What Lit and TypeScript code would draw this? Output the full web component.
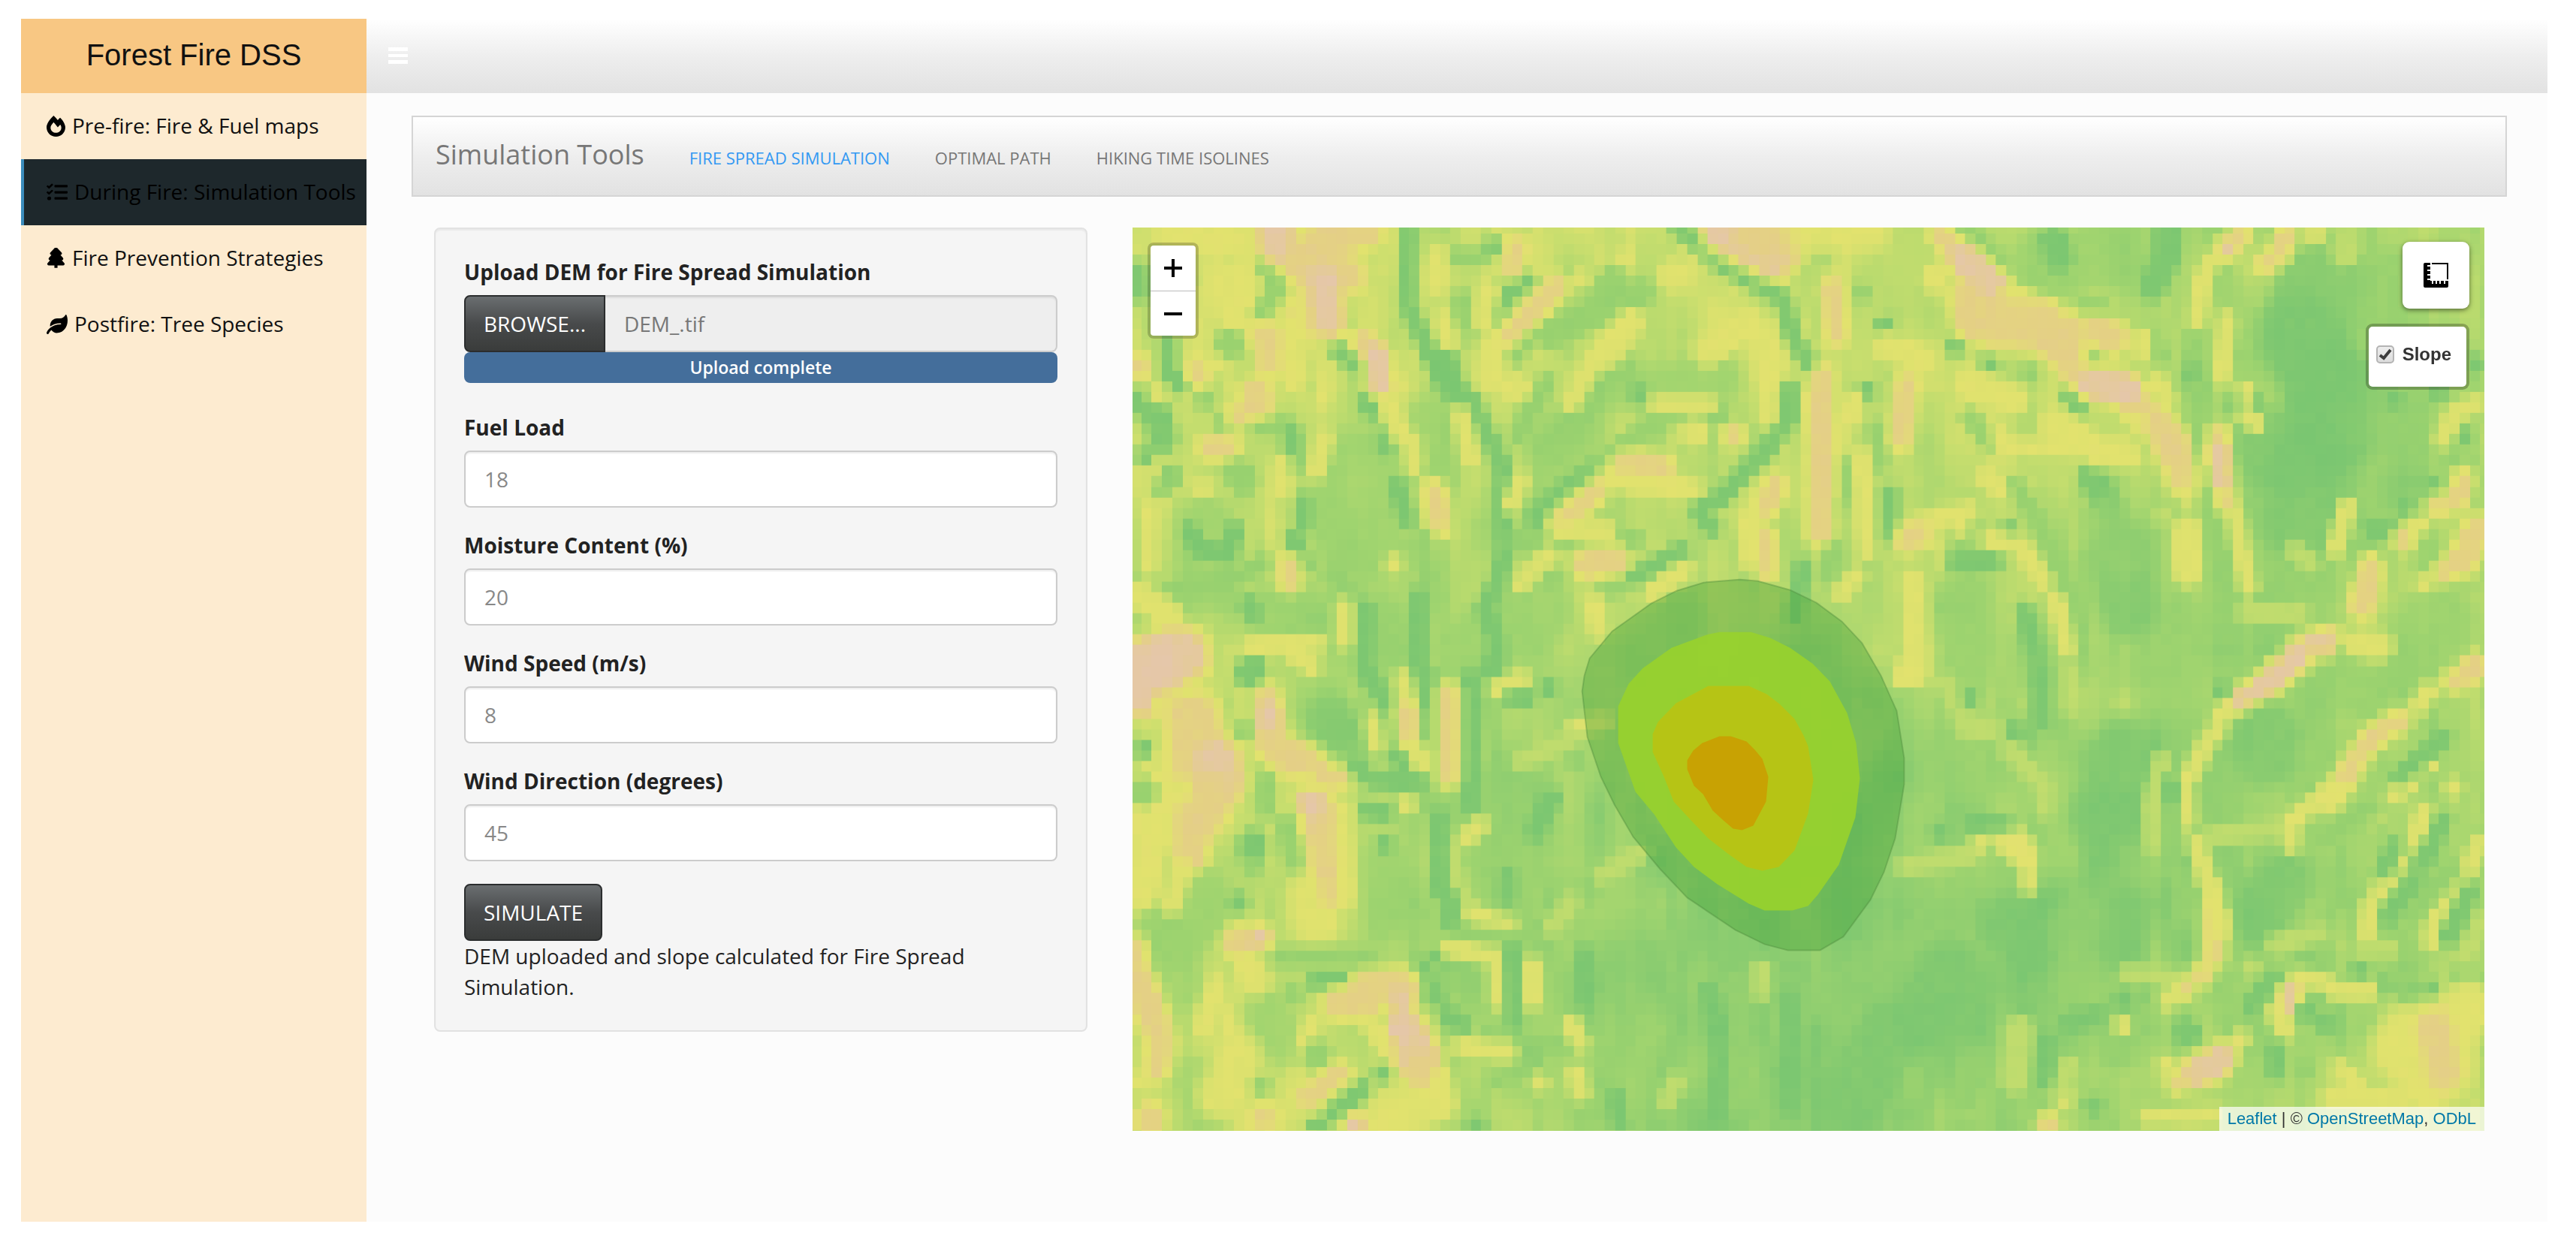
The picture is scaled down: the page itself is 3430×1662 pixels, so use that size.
import { LitElement, html, css, svg } from "lit";
import { customElement, property, query, state } from "lit/decorators.js";
import { classMap } from "lit/directives/class-map.js";

/* ---------- icons ---------- */

const ICONS: Record<string, { box: string; shape: unknown }> = {
  fire: {
    box: "0 0 448 512",
    shape: svg`<path d="M323.56 51.2c-20.8 19.3-39.58 39.59-56.22 59.97C240.08 73.62 206.28 35.53 168 0 69.74 91.17 0 209.96 0 281.6 0 408.85 100.29 512 224 512s224-103.15 224-230.4c0-53.27-51.98-163.14-124.44-230.4zm-19.47 340.65C282.43 407.01 255.72 416 226.86 416 154.71 416 96 368.26 96 290.75c0-38.61 24.31-72.63 72.79-130.75 6.93 7.98 98.83 125.34 98.83 125.34l58.63-66.88c4.14 6.85 7.91 13.55 11.27 19.97 27.35 52.19 15.81 118.97-33.43 153.42z"/>`,
  },
  tasks: {
    box: "0 0 512 512",
    shape: svg`<path d="M139.61 35.5a12 12 0 0 0-17 0L58.93 98.81l-22.7-22.12a12 12 0 0 0-17 0L3.53 92.41a12 12 0 0 0 0 17l47.59 47.4a12.78 12.78 0 0 0 17.61 0l15.59-15.62L156.52 69a12.09 12.09 0 0 0 .09-17zm0 159.19a12 12 0 0 0-17 0l-63.68 63.72-22.7-22.1a12 12 0 0 0-17 0L3.53 252a12 12 0 0 0 0 17L51 316.5a12.77 12.77 0 0 0 17.6 0l15.7-15.69 72.2-72.22a12 12 0 0 0 .09-16.9zM64 368c-26.49 0-48.59 21.5-48.59 48S37.53 464 64 464a48 48 0 0 0 0-96zm432 16H208a16 16 0 0 0-16 16v32a16 16 0 0 0 16 16h288a16 16 0 0 0 16-16v-32a16 16 0 0 0-16-16zm0-320H208a16 16 0 0 0-16 16v32a16 16 0 0 0 16 16h288a16 16 0 0 0 16-16V80a16 16 0 0 0-16-16zm0 160H208a16 16 0 0 0-16 16v32a16 16 0 0 0 16 16h288a16 16 0 0 0 16-16v-32a16 16 0 0 0-16-16z"/>`,
  },
  tree: {
    box: "-32 0 448 512",
    shape: svg`<path stroke="#000" stroke-width="30" d="M378.31 378.49L298.42 288h30.63c9.01 0 16.98-5 20.78-13.06 3.8-8.04 2.55-17.26-3.28-24.05L268.42 160h28.89c9.1 0 17.3-5.35 20.86-13.61 3.52-8.13 1.86-17.59-4.24-24.08L203.66 4.83c-6.03-6.45-17.28-6.45-23.32 0L70.06 122.31c-6.1 6.49-7.75 15.95-4.24 24.08C69.38 154.65 77.59 160 86.69 160h28.89l-78.14 90.91c-5.81 6.78-7.06 15.99-3.27 24.04C37.97 283 45.93 288 54.95 288h30.63L5.69 378.49c-6 6.79-7.36 16.09-3.56 24.26 3.75 8.05 12 13.25 21.01 13.25H170v60h44v-60h146.86c9.01 0 17.26-5.2 21.01-13.25 3.8-8.17 2.44-17.47-3.56-24.26z"/>`,
  },
  leaf: {
    box: "0 0 576 512",
    shape: svg`<path d="M546.2 9.7c-5.6-12.5-21.6-13-28.3-1.2C486.9 62.4 431.4 96 368 96h-80C182 96 96 182 96 288c0 7 .8 13.7 1.5 20.5C161.3 262.8 253.4 224 384 224c8.8 0 16 7.2 16 16s-7.2 16-16 16C132.6 256 26 410.1 2.4 468c-6.6 16.3 1.2 34.9 17.5 41.6 16.4 6.8 35-1.1 41.8-17.3 1.5-3.6 20.9-47.9 71.9-90.6 32.4 43.9 94 85.8 174.9 77.2C465.5 467.5 576 326.7 576 154.3c0-50.2-10.8-102.2-29.8-144.6z"/>`,
  },
  bars: {
    box: "0 0 26 22",
    shape: svg`<path d="M0 0h26v5H0zM0 9h26v4H0zM0 17h26v5H0z"/>`,
  },
};

const icon = (name: string, cls: string) =>
  html`<svg class=${cls} viewBox=${ICONS[name].box} preserveAspectRatio="none" aria-hidden="true">${ICONS[name].shape}</svg>`;

/* ---------- slope raster ---------- */

const MAP_W = 1801;
const MAP_H = 1204;
const CELL_W = 13.72;
const CELL_H = 14.06;
const COLS = 132;
const ROWS = 87;

const LEVELS: Record<string, number> = { G: 0.03, g: 0.19, m: 0.48, y: 0.68, o: 0.84, p: 0.95 };

/** Colour ramp from flat ground to the steepest slope. */
const RAMP: [number, number[]][] = [
  [0, [119, 197, 113]],
  [0.25, [160, 212, 111]],
  [0.5, [196, 221, 110]],
  [0.68, [226, 226, 110]],
  [0.84, [228, 207, 134]],
  [1, [229, 196, 182]],
];

/** Coarse slope trend across the whole sheet. */
const TREND = [
  [0.54, 0.62, 0.5, 0.52, 0.5, 0.45, 0.3, 0.38, 0.36],
  [0.5, 0.5, 0.44, 0.46, 0.52, 0.5, 0.42, 0.12, 0.3],
  [0.42, 0.34, 0.36, 0.42, 0.42, 0.38, 0.28, 0.25, 0.35],
  [0.58, 0.44, 0.27, 0.25, 0.1, 0.25, 0.14, 0.25, 0.32],
  [0.55, 0.44, 0.28, 0.17, 0.08, 0.08, 0.14, 0.25, 0.3],
  [0.55, 0.56, 0.4, 0.17, 0.12, 0.25, 0.35, 0.42, 0.52],
];

interface Sheet {
  x: number;
  y: number;
  sx: number;
  sy: number;
  lines: string;
}

/** Digitised valleys and ridges: level, width in cells, then the vertices. */
const SHEETS: Sheet[] = [
  {
    x: -27, y: -23, sx: 1.6505, sy: 2.529,
    lines: `g7 550,900 540,1080
g4 200,1060 200,1260|g5 930,1350 780,1500|g4 600,1400 600,1560|g3 1120,560 960,780|g3 1040,760 920,980|g3 330,1360 470,1380
g3 700,700 710,900|g2 1160,280 960,420|g3 1330,560 1180,620|y3 260,250 290,370|y2 380,440 400,560|y2 130,90 270,100
G1 650,60 650,320 675,400 700,490 735,590 790,640 820,740 860,860 860,1030 865,1150 850,1250 820,1340 845,1450 845,1560
G2 735,520 745,590|G1 1250,60 1300,130 1350,190 1420,250 1475,300 1500,440 1535,520
G1 1490,600 1490,700 1450,790 1400,870 1340,970 1290,1010 1320,1070|G1 1250,1150 1190,1200 1150,1240|g2 1100,1260
G1 125,440 125,540 150,590|g1 205,640|G2 70,650 100,700 110,770|G1 70,830|G1 60,200 60,280|g1 335,190 370,250 330,340
g1 240,725 380,725|G1 398,760 398,860|g1 420,960|G1 420,1000 420,1060|G1 398,1110 420,1190|g1 480,1230 530,1290 557,1350|G1 557,1350 557,1560
G1 300,1330 310,1360|g2 460,1390|G1 915,240 870,290 845,370|g1 800,450|g1 910,430 890,490|g1 750,160 810,160|G1 840,125
G1 560,650 570,680|g1 590,760|G1 600,800|G1 628,930 650,1040|G1 170,1080 190,1140 260,1160 270,1080|G1 130,900|g1 110,940
g2 270,880 290,910|G1 500,480 540,520|g2 1100,240 1080,290|g1 770,300 770,390|G1 1065,620 1040,660|g1 1130,540 1065,620 990,740 940,800
G1 1070,860 980,960 930,1040|G1 890,1120|g1 960,580 910,700 890,760|g1 1220,690 1340,690|g1 1220,700 1150,760 1070,860|G1 1160,620
g1 680,1110 690,1230|G1 675,1300 675,1560|g1 890,1110 1150,1110|g1 970,1250|g1 120,1290 260,1250 330,1190|G1 320,1540|G1 1520,1200 1500,1360
g4 1240,1400 1180,1530|g1 160,250|g2 260,450
p2 360,70 365,130|o2 410,190 470,100|o2 470,100 560,70|o2 440,180 520,220|p2 465,250 475,370|o1 340,420 340,520|o1 550,440 580,500
p1 585,490 590,590|y1 610,650 640,760|y1 660,780 665,860|y1 700,930 730,1080|o1 715,960 715,1030|o2 320,620 320,650|o1 280,700|o1 190,550
o1 215,800 255,800|o1 60,530|y1 100,620|y1 720,150 710,250|y1 730,370 740,430|o1 890,130 880,190|y1 830,280 820,380|o1 980,260 930,330 870,420
y2 830,470 830,560|y2 890,600|y1 1030,230|y2 1140,380 1090,480|y1 1060,510 1040,570 1010,650|p3 1350,70 1400,110 1450,150|o3 1420,80 1480,100
y2 1230,220|y2 1400,380 1310,480|y1 1440,540 1440,700|o1 1370,760|y2 1280,750|y1 1200,655 1310,655|o2 1130,870 1200,880|y1 1080,910 1280,940
o1 1060,960 1030,990 990,1045|y1 980,1080 1090,1080|o1 1460,930 1440,1000|o1 1440,1110 1440,1210|y1 1400,1040 1400,1180
o1 1550,640 1555,1080|o2 1050,1190 1100,1180|y1 960,1160 900,1260|y1 1260,1210 1190,1290|y1 470,770 450,880|y1 375,860 375,940|y1 770,700 790,840
y1 900,910 880,990|o1 390,1200 390,1250|y1 620,1190|y1 80,1010 80,1200|y2 60,1300 120,1360|p4 60,1540 150,1500|y1 510,1340 510,1450
y1 400,1500 440,1540|y1 310,1470 450,1460|y1 1060,1330 1070,1420|y1 1130,160|y1 1460,470 1460,560|y1 230,520|y1 200,940`,
  },
  {
    x: 893, y: -23, sx: 1.522, sy: 2.529,
    lines: `G7 1060,260 1030,420|G6 1000,420 1050,560|G7 1070,600 1080,740|G6 1020,800 950,820|G6 1030,860 1010,1060|g5 1200,250 1180,330
g4 1200,660 1220,780|g5 600,150 500,180|g3 480,1450 480,1560|g4 1000,1230 1030,1280|g3 720,1400 720,1540|g6 1280,1400 1250,1540|g3 330,1300 330,1560
G2 510,100 520,160|G2 740,70 740,150 710,260|g1 600,330 560,340|g1 330,70 400,170|g2 40,130|G1 165,390|G1 310,460|G1 380,515|g1 460,550|G1 540,620 560,660
g1 800,400 790,500|G1 790,550 800,600|g1 800,600 800,820 830,1000 840,1150 860,1300 880,1450|G1 1200,640|G1 880,655 920,655
G1 1340,765|g1 1320,840|G1 1280,930|G1 1220,1000|G1 1190,1080 1150,1080|g1 1130,1110|G1 420,1080|g1 320,1110|G1 1290,610|G1 1370,520
G1 310,1185 390,1185|G2 590,900 620,1000|G4 640,1150 660,1340|g3 620,1050 640,1150|g1 430,930 480,1050 515,1200 560,1400 570,1560
g1 340,700 380,780|g1 150,740 155,850|G1 175,960 175,1090|g1 70,1000 60,1180 50,1230|G1 450,1350 470,1480|g1 120,280|G1 130,610|g1 590,480
g1 700,430 730,490|g1 500,340 610,350|g1 90,870 90,960
o1 280,80 310,140|p2 330,170 370,230 390,270|y1 420,280 500,330|o2 330,300 340,380|o3 400,390 480,390 530,410|o2 600,410 630,430|o2 500,440 540,500
o1 550,560|p2 590,590 650,600|p1 670,620 685,690|o2 720,710 750,780|o2 750,800 770,900|y1 780,960|o1 845,760 845,820|p1 845,830 850,910|o1 860,980
y1 880,1040 890,1150 905,1270|o1 890,80|p1 860,130|y1 830,170 810,240 800,370|o1 980,80 970,140|o1 940,180|y1 1040,80|y1 860,370 850,560|y1 900,610
y1 900,690 920,720|y1 1370,650 1320,690 1300,770|o1 60,270 70,420|y3 120,60 20,70|o1 40,560 45,1080|y1 105,640 100,700|y1 120,830 130,1150
o1 210,590 200,770|y2 240,500 170,460|y2 340,580 430,640|y2 510,720 580,790|y1 400,760 420,800 660,800|y1 600,840 670,840|y2 270,230|y1 370,900 400,940
y1 340,1010 220,1060|y1 320,1070|o1 210,1110 240,1100|y1 380,1110 440,1130 470,1200 490,1250|y1 515,1320 535,1480|y1 110,1230 80,1290|y2 225,1260 230,1560
m1 730,1030|y2 780,1080 780,1220|y1 1105,1000 1080,1140|o1 1340,910 1330,970|o1 1290,1000|y1 1250,1060|o1 1220,1110|y1 1150,1180 1120,1340|o1 1155,1220 1140,1340
o2 1370,1080 1340,1180|o1 1300,1220|y1 1260,1260|y1 1080,1430|p2 1050,1465 1010,1500|o1 960,1550|o1 1360,1540|y2 1130,1460 1170,1470|m1 900,1360 1010,1360
y1 690,430 690,480|y1 680,700|m2 1100,140|m1 1000,1150 1030,1190|y1 720,580 740,640`,
  },
  {
    x: -27, y: 577, sx: 1.6505, sy: 2.45,
    lines: `g5 200,800 130,900|g4 110,920 140,1050|g4 470,160 490,220|g3 600,680 600,830|g3 340,1150 370,1240|g4 840,480 820,620|g4 880,600 860,740|g3 180,1370 210,1480
y3 60,470 100,560|y2 80,660 70,760|y3 280,1300 240,1420|y3 700,1440 620,1500|y3 440,780 450,860
p3 100,30 70,110|y1 110,140 190,130|o4 180,210 190,310|p3 235,340 240,390|o3 220,440 200,500|o2 185,540 175,630|y1 160,680 130,800|o1 340,110 345,230|p1 345,170 345,210
o2 350,280 390,320|o2 430,320 490,370|p1 430,460|p2 455,490 455,530|o2 465,560 470,660|o1 480,690 485,760|y1 510,480 515,780
G2 300,40|G2 310,600 310,620|g1 310,670|G1 70,290|g2 70,430|g1 340,400 340,490|g1 380,540 400,660|G1 280,790|g1 290,230
G3 480,200 520,270|G1 540,350 570,390 650,400|g1 690,470 760,500|G1 570,60 600,130 605,220 630,320 680,390|G1 695,60 695,260|G1 790,60 790,480
o1 740,110 740,380|y1 640,60 650,200|o1 650,180 650,250|y1 670,290 680,340|y1 575,200 580,270|G1 830,30|y1 900,60 850,90|G1 910,125 880,125|G1 960,90
y1 1080,200 1020,220|m1 1010,260 900,330|g1 1020,330|G1 970,450 930,560|G1 560,490 600,500|G1 600,600|y1 650,470|y1 810,540 780,580
m1 745,620 760,740 780,810|y1 800,830 870,870|G1 720,520 720,750|G1 745,780 745,850|g1 770,900 900,910 960,860 1040,760 1100,680|G1 870,710 870,770
m1 1160,630 1080,700|m1 1010,790 970,870|G1 720,970|y1 740,940 850,970|y1 850,1010 850,1110|G1 500,1045 450,1050|g1 400,1090|g1 560,970 380,970
G1 680,1000 710,1100|G1 740,1160 770,1190|g1 830,1210|G1 880,950 885,1190|g1 900,1240|G1 930,1280|y1 925,1000 925,1110|G1 1040,960 1040,1110
g1 920,1250 1030,1260|g1 1080,1370|G1 1110,1430 1120,1520|y1 1010,1190 1030,1250|y1 1020,1350 1030,1410|o2 280,920|p1 330,905|y2 300,1000 320,1050|y1 230,1060 200,1200
o2 560,1070 640,1060|o2 500,1120 560,1120|y1 440,1180 420,1260|p1 640,1110 635,1200|p3 650,1230 670,1290|o2 680,1330|y1 770,1260 870,1280
o1 55,940 60,1020|o2 70,1080 90,1170|o1 110,1230 100,1330|y1 60,1380|g1 330,1390|g2 450,1290|G1 595,1350|G1 550,1400 490,1480|G1 450,1520
o1 500,1350 430,1430|o1 330,1490|o2 80,1500|p1 535,1520|y1 730,1360 735,1460|y1 940,1380|G1 1310,1080 1340,1300 1330,1500|G1 800,1525
G1 1490,1100 1490,1460|m1 1430,1010 1430,1080|m1 1220,1440 1240,1380|g1 1380,1050 1380,1450|y1 560,1180 600,1260|g1 850,1370`,
  },
  {
    x: 893, y: 577, sx: 1.522, sy: 2.005,
    lines: `G5 640,260 650,360|G4 600,420 660,420|G5 940,200 930,250|G4 980,600 930,680|g6 300,780 100,900|G5 180,1000 100,1180|G5 300,850 250,950|G4 480,750 420,700
g4 300,260 400,270|g4 850,350 820,400|g3 1040,60 1150,90|g4 560,700 570,820|G3 660,680 650,760|g2 350,1100 330,1160
y1 210,15 200,50|m1 290,60 320,130|m1 330,180 390,190|m1 420,240 470,310|m1 490,340 490,400|G1 480,20 485,160|m1 545,30 545,120|m1 650,110
y1 360,490|o1 430,500|y2 410,465 450,510|y1 460,540 460,600|m1 340,520 210,550|G1 280,460|G1 350,435 410,435|G1 430,190|G1 340,100
p1 1000,5 950,60|p1 930,70 880,110|y1 850,140 840,190|y1 820,220 790,300|y1 775,320 780,430|y1 800,490 820,590|y1 835,610 840,680|o1 835,690 835,790|y1 830,640 850,720
o1 810,840|o1 770,880|y1 740,910|m1 730,270 710,380|m1 710,400 710,490|G1 748,330 748,400|g1 748,400 750,550 780,640|G1 850,80
o1 1370,20 1320,55|y1 1270,80 1250,120|o1 1210,160 1160,200|o1 1150,220 1110,290|o1 1100,320 1070,370|y1 1080,340 1000,420|y1 990,440 990,490
m1 960,450 830,470|y1 1270,280|y1 1230,330 1200,360|m1 1160,420|y1 1260,410 1240,480|y1 1210,530 1170,620|y1 1150,660 1145,730|m1 1140,770 1190,770
y1 1375,490 1350,560|y1 1330,600 1290,670|y1 1280,690 1275,750|m1 1380,700 1340,790|y1 1320,340
G1 1300,210 1210,310|g1 1150,400 1060,470|G1 1300,430 1260,540|G1 1200,500 1180,560|G1 1240,590 1190,680|g1 1320,560 1240,680|G1 1350,620 1310,740
m1 1050,730 960,760|m1 910,820|g1 1050,800|G1 1130,830|G1 1180,870|G1 1230,900|G1 1280,880|G1 1330,855 1370,855|G1 960,850 910,920|g1 860,970|G2 780,995
y1 1010,850 1060,860|y1 1080,885 1150,885|p1 990,890 985,920|y1 960,940 980,990|G1 1020,940|G1 1060,970
y4 1350,930 1330,960|y5 1240,1010 1220,1040|y4 1310,1080 1270,1130|o2 1280,980 1300,1100|y1 890,1010|o1 860,1050|p2 840,1075 800,1100|o1 760,1130|y1 740,1080
G1 700,880|G1 650,910|G1 600,945 540,970|G1 495,1020 490,1120|g1 480,1190|m2 440,990 430,1120|y1 650,975|y1 530,1170|o1 500,1240|y1 700,1220 830,1215
G1 590,1190|g2 640,1060|y1 1090,1090 1120,1130|y2 1080,1170 1200,1180|G1 960,1040 960,1100|g1 1020,1090|m1 750,850 660,840|m1 540,1080 530,1140`,
  },
];

const mix = (a: number, b: number, t: number) => a + (b - a) * t;
const clamp = (v: number) => Math.max(0, Math.min(1, v));

const hash = (x: number, y: number) => {
  const s = Math.sin(x * 127.1 + y * 311.7) * 43758.5453;
  return s - Math.floor(s);
};

function valueNoise(x: number, y: number) {
  const ix = Math.floor(x);
  const iy = Math.floor(y);
  const fx = x - ix;
  const fy = y - iy;
  return mix(
    mix(hash(ix, iy), hash(ix + 1, iy), fx),
    mix(hash(ix, iy + 1), hash(ix + 1, iy + 1), fx),
    fy,
  );
}

function segmentDistance(px: number, py: number, a: number[], b: number[]) {
  const dx = b[0] - a[0];
  const dy = b[1] - a[1];
  const len = dx * dx + dy * dy;
  const t = len ? clamp(((px - a[0]) * dx + (py - a[1]) * dy) / len) : 0;
  return Math.hypot(px - a[0] - dx * t, py - a[1] - dy * t);
}

function slopeGrid() {
  const grid: number[][] = [];
  for (let r = 0; r < ROWS; r++) {
    const row: number[] = [];
    for (let c = 0; c < COLS; c++) {
      const u = Math.min((c / COLS) * 8, 7.999);
      const v = Math.min((r / ROWS) * 5, 4.999);
      const iu = Math.floor(u);
      const iv = Math.floor(v);
      const trend = mix(
        mix(TREND[iv][iu], TREND[iv][iu + 1], u - iu),
        mix(TREND[iv + 1][iu], TREND[iv + 1][iu + 1], u - iu),
        v - iv,
      );
      const broad = (valueNoise(c / 3, r / 4) - 0.5) * 0.2;
      const streak = (valueNoise(c / 1.3 + 40, r / 5 + 9) - 0.5) * (0.08 + trend * 0.35);
      row.push(trend + broad + streak);
    }
    grid.push(row);
  }
  for (const sheet of SHEETS) {
    for (const entry of sheet.lines.split(/[|\n]/)) {
      const [head, ...rest] = entry.trim().split(" ");
      const level = LEVELS[head[0]];
      const half = Number(head.slice(1)) / 2;
      const broad = half > 1 && level < 0.5;
      const fade = half > 1 ? 1.8 : level > 0.8 ? 1.4 : 0.9;
      const strength = broad ? 0.7 : 0.94;
      const pts = rest.map((p) => {
        const [x, y] = p.split(",").map(Number);
        return [(sheet.x + x / sheet.sx) / CELL_W, (sheet.y + y / sheet.sy) / CELL_H];
      });
      if (pts.length === 1) pts.push(pts[0]);
      const reach = half + fade + 1;
      const xs = pts.map((p) => p[0]);
      const ys = pts.map((p) => p[1]);
      const c0 = Math.max(0, Math.floor(Math.min(...xs) - reach));
      const c1 = Math.min(COLS - 1, Math.ceil(Math.max(...xs) + reach));
      const r0 = Math.max(0, Math.floor(Math.min(...ys) - reach));
      const r1 = Math.min(ROWS - 1, Math.ceil(Math.max(...ys) + reach));
      for (let r = r0; r <= r1; r++) {
        for (let c = c0; c <= c1; c++) {
          let d = Infinity;
          for (let i = 1; i < pts.length; i++) {
            d = Math.min(d, segmentDistance(c + 0.4, r + 0.1, pts[i - 1], pts[i]));
          }
          const t = clamp(1 - (d - half) / fade);
          grid[r][c] = mix(grid[r][c], level, t * strength);
        }
      }
    }
  }
  return grid;
}

function rampColour(v: number) {
  const t = clamp(v);
  let i = 1;
  while (i < RAMP.length - 1 && RAMP[i][0] < t) i++;
  const [a, ca] = RAMP[i - 1];
  const [b, cb] = RAMP[i];
  const k = (t - a) / (b - a);
  return `rgb(${ca.map((n, j) => Math.round(mix(n, cb[j], k))).join(",")})`;
}

@customElement("slope-map")
export class SlopeMap extends LitElement {
  @state() private slope = true;
  @query("canvas") private canvas!: HTMLCanvasElement;

  static styles = css`
    :host {
      display: block;
      position: relative;
      aspect-ratio: 184 / 123;
      overflow: hidden;
      background: #ddd;
      font-family: "Liberation Sans", Arial, sans-serif;
      color: #333;
    }
    canvas,
    .overlay {
      position: absolute;
      inset: 0;
      width: 100%;
      height: 100%;
      display: block;
    }
    .hidden {
      visibility: hidden;
    }
    .zoom {
      position: absolute;
      left: 20px;
      top: 20px;
      display: grid;
      border: 4px solid rgba(0, 0, 0, 0.2);
      border-radius: 8px;
      background: #fff;
      background-clip: padding-box;
    }
    .zoom button {
      width: 60px;
      height: 60px;
      border: 0;
      padding: 0;
      background: none;
      display: grid;
      place-items: center;
    }
    .zoom button + button {
      border-top: 1px solid #bbb;
    }
    .zoom svg {
      width: 24px;
      height: 24px;
    }
    .tools {
      position: absolute;
      right: 20px;
      top: 19px;
      display: flex;
      flex-direction: column;
      align-items: flex-end;
      gap: 20px;
    }
    .measure {
      width: 89px;
      height: 89px;
      border: 0;
      border-radius: 9px;
      padding: 0;
      background: #fff;
      box-shadow: 0 2px 6px rgba(0, 0, 0, 0.5);
      display: grid;
      place-items: center;
    }
    .measure svg {
      width: 33px;
      height: 33px;
    }
    .layers {
      display: flex;
      align-items: center;
      gap: 11px;
      box-sizing: border-box;
      height: 88px;
      padding: 0 20px 7px 10px;
      border: 4px solid rgba(0, 0, 0, 0.25);
      border-radius: 9px;
      background: #fff;
      background-clip: padding-box;
      font-size: 24px;
      font-weight: bold;
    }
    .tick {
      display: grid;
    }
    .tick input,
    .tick svg {
      grid-area: 1 / 1;
      width: 24px;
      height: 24px;
      margin: 0;
    }
    .tick input {
      appearance: none;
      border: 2px solid #b4b4b4;
      border-radius: 5px;
      background: linear-gradient(#ededed, #dcdcdc);
    }
    .tick svg {
      pointer-events: none;
    }
    .credit {
      position: absolute;
      right: 0;
      bottom: 0;
      padding: 0 11px;
      background: rgba(255, 255, 255, 0.7);
      font-size: 22px;
      line-height: 32px;
    }
    .credit a {
      color: #0078a8;
      text-decoration: none;
    }
  `;

  firstUpdated() {
    this.canvas.width = MAP_W;
    this.canvas.height = MAP_H;
    const ctx = this.canvas.getContext("2d");
    if (!ctx) return;
    const edgeX = (c: number) => (c === 0 ? 0 : Math.round(c * CELL_W - 2));
    const edgeY = (r: number) => (r === 0 ? 0 : Math.round(r * CELL_H - 6));
    slopeGrid().forEach((row, r) => {
      row.forEach((v, c) => {
        ctx.fillStyle = rampColour(v + (hash(c + 7, r + 3) - 0.5) * 0.03);
        ctx.fillRect(edgeX(c), edgeY(r), edgeX(c + 1) - edgeX(c), edgeY(r + 1) - edgeY(r));
      });
    });
  }

  private toggle(e: Event) {
    this.slope = (e.target as HTMLInputElement).checked;
  }

  render() {
    return html`
      <canvas class=${classMap({ hidden: !this.slope })} aria-label="Slope raster"></canvas>
      <svg class="overlay" viewBox="0 0 1801 1204" preserveAspectRatio="none" aria-hidden="true">
        <path fill="#3c9b32" fill-opacity=".36" stroke="#4d8a3c" stroke-opacity=".4" stroke-width="2" d="M809 469 833 471 876 483 911 500 945 525 972 554 997 597 1018 644 1028 707 1028 742 1016 814 1001 859 983 896 947 945 916 963 873 963 842 955 803 936 739 893 703 855 667 812 642 769 624 732 606 679 599 618 602 597 609 574 639 538 691 501 725 484 761 473Z"/>
        <path fill="#98d12d" fill-opacity=".93" d="M782 539H824L850 547 876 560 906 581 929 605 952 647 964 687 969 734 963 786 941 849 913 889 900 904 879 910H842L821 901 779 875 748 852 724 826 695 782 670 752 647 687V638L661 608 680 587 718 560 767 542Z"/>
        <path fill="#b8c415" fill-opacity=".97" d="M767 611H821L845 622 862 635 882 655 894 677 900 691 907 736 900 781 882 830 861 852 839 857 818 852 794 835 767 814 745 791 721 765 708 732 693 699V675L700 659 724 634Z"/>
        <path fill="#c8a203" d="M782 678H797L818 685 829 696 839 708 847 732 844 765 827 797 812 803 800 801 786 789 773 777 760 755 748 744 739 722V710L747 697 759 687Z"/>
      </svg>

      <div class="zoom">
        <button type="button" aria-label="Zoom in">
          <svg viewBox="0 0 24 24"><path d="M10 0h4v10h10v4H14v10h-4V14H0v-4h10z" /></svg>
        </button>
        <button type="button" aria-label="Zoom out">
          <svg viewBox="0 0 24 24"><path d="M0 10h24v4H0z" /></svg>
        </button>
      </div>

      <div class="tools">
        <button class="measure" type="button" aria-label="Measure">
          <svg viewBox="0 0 33 33">
            <path d="M0 2Q0 0 2 0H9V3H5V5H9V9H5V11H9V15H5V17H9V21H5V23H9V24H11V28H13V24H16V28H18V24H21V28H23V24H27V28H29V24H33V31Q33 33 31 33H2Q0 33 0 31Z" />
            <path d="M11 0H33V22H31V2H11Z" />
          </svg>
        </button>
        <label class="layers">
          <span class="tick">
            <input type="checkbox" .checked=${this.slope} @change=${this.toggle} />
            <svg class=${classMap({ hidden: !this.slope })} viewBox="0 0 24 24" aria-hidden="true">
              <path d="M5 13 10 17 19 6" fill="none" stroke="#3c3c3c" stroke-width="4" />
            </svg>
          </span>
          Slope
        </label>
      </div>

      <div class="credit">
        <a href="#leaflet">Leaflet</a> | © <a href="#osm">OpenStreetMap</a>,
        <a href="#odbl">ODbL</a>
      </div>
    `;
  }
}

/* ---------- labelled text field ---------- */

@customElement("number-field")
export class NumberField extends LitElement {
  @property() label = "";
  @property() value = "";

  static styles = css`
    :host {
      display: block;
    }
    .label {
      display: block;
      margin-bottom: 10px;
      font-weight: bold;
    }
    .field {
      display: block;
      box-sizing: border-box;
      width: 100%;
      height: 76px;
      padding: 0 25px;
      border: 2px solid #ccc;
      border-radius: 8px;
      background: #fff;
      box-shadow: inset 0 2px 2px rgba(0, 0, 0, 0.07);
      font: inherit;
      color: #888;
    }
  `;

  render() {
    return html`
      <label class="label" for="field">${this.label}</label>
      <input class="field" id="field" type="text" inputmode="numeric" .value=${this.value} />
    `;
  }
}

/* ---------- page ---------- */

const MENU = [
  { icon: "fire", text: "Pre-fire: Fire & Fuel maps" },
  { icon: "tasks", text: "During Fire: Simulation Tools", wide: true, active: true },
  { icon: "tree", text: "Fire Prevention Strategies" },
  { icon: "leaf", text: "Postfire: Tree Species", wide: true },
];

const TABS = ["Fire spread simulation", "Optimal path", "Hiking time isolines"];

const FIELDS = [
  { label: "Fuel Load", value: "18" },
  { label: "Moisture Content (%)", value: "20" },
  { label: "Wind Speed (m/s)", value: "8" },
  { label: "Wind Direction (degrees)", value: "45" },
];

@customElement("app-root")
export class AppRoot extends LitElement {
  @state() private tab = 0;
  @query(".picker") private picker!: HTMLInputElement;

  static styles = css`
    :host {
      display: block;
      box-sizing: border-box;
      min-height: 100vh;
      padding: 25px 38px 35px 28px;
      background: #fff;
      font-family: "Open Sans", "Noto Sans", sans-serif;
      font-size: 28px;
      line-height: 41px;
      color: #222;
    }
    .shell {
      display: grid;
      grid-template-columns: 460px minmax(0, 1fr);
      min-height: calc(100vh - 60px);
      background: #fcfcfc;
    }
    .side {
      background: #fdebd0;
    }
    .logo {
      display: grid;
      place-items: center;
      box-sizing: border-box;
      height: 99px;
      padding-bottom: 2px;
      background: #f8c783;
      color: #111;
      font-family: "Liberation Sans", Arial, sans-serif;
      font-size: 40px;
      text-decoration: none;
    }
    .menu {
      display: grid;
    }
    .menu a {
      display: flex;
      align-items: center;
      gap: 9px;
      box-sizing: border-box;
      height: 88px;
      padding: 0 0 1px 30px;
      border-left: 4px solid transparent;
      color: #111;
      text-decoration: none;
      white-space: nowrap;
    }
    .menu a.active {
      border-left-color: #3c8dbc;
      background: #1e282c;
      color: #000;
    }
    .icon {
      width: 25px;
      height: 28px;
      fill: #000;
    }
    .icon-wide {
      width: 28px;
      height: 26px;
      fill: #000;
    }
    .bars {
      width: 26px;
      height: 22px;
      fill: #fff;
    }
    .top {
      display: flex;
      align-items: center;
      box-sizing: border-box;
      height: 99px;
      padding: 0 0 2px 29px;
      background: linear-gradient(#fff, #eee 50%, #e2e2e2);
    }
    .toggle {
      display: grid;
      border: 0;
      padding: 0;
      background: none;
    }
    .content {
      padding: 30px 54px 30px 60px;
    }
    .tabs {
      display: flex;
      align-items: baseline;
      gap: 60px;
      margin-bottom: 41px;
      padding: 29px 30px;
      border: 2px solid #d5d5d5;
      background: linear-gradient(#fff, #eee 50%, #e2e2e2);
      color: #777;
    }
    .brand {
      font-size: 36px;
    }
    .tabs a {
      color: #777;
      font-size: 22px;
      text-decoration: none;
      text-transform: uppercase;
    }
    .tabs a.current {
      color: #3399f3;
    }
    .columns {
      display: grid;
      grid-template-columns: minmax(0, 1fr) minmax(0, 2fr);
      align-items: start;
    }
    .columns > * {
      margin: 0 30px;
    }
    .panel {
      display: grid;
      gap: 30px;
      padding: 37px 38px;
      border: 2px solid #e2e2e2;
      border-radius: 8px;
      background: #f5f5f5;
      box-shadow: inset 0 2px 2px rgba(0, 0, 0, 0.05);
    }
    .upload {
      padding-bottom: 9px;
    }
    .label {
      display: block;
      margin-bottom: 10px;
      font-weight: bold;
    }
    .file {
      display: flex;
    }
    .button {
      height: 76px;
      padding: 0 24px;
      border: 2px solid #2b2d2e;
      border-radius: 8px;
      background: linear-gradient(#6a6e70, #484a4b 50%, #3a3c3b);
      color: #fff;
      font: inherit;
      text-transform: uppercase;
    }
    .browse {
      border-radius: 8px 0 0 8px;
    }
    .name {
      flex: 1;
      min-width: 0;
      box-sizing: border-box;
      height: 76px;
      padding: 0 25px;
      border: 2px solid #ccc;
      border-left: 0;
      border-radius: 0 8px 8px 0;
      background: #eee;
      box-shadow: inset 0 2px 2px rgba(0, 0, 0, 0.07);
      font: inherit;
      color: #777;
    }
    .picker {
      display: none;
    }
    .progress {
      border-radius: 8px;
      background: #446e9b;
      color: #fff;
      font-size: 23px;
      font-weight: 600;
      text-align: center;
    }
    .status {
      margin: 0;
    }
  `;

  private selectTab(e: Event, index: number) {
    e.preventDefault();
    this.tab = index;
  }

  render() {
    return html`
      <div class="shell">
        <aside class="side">
          <a class="logo" href="#home">Forest Fire DSS</a>
          <nav class="menu">
            ${MENU.map(
              (m) => html`<a href="#" class=${classMap({ active: !!m.active })}>
                ${icon(m.icon, m.wide ? "icon-wide" : "icon")}<span>${m.text}</span>
              </a>`,
            )}
          </nav>
        </aside>
        <div>
          <header class="top">
            <button class="toggle" type="button" aria-label="Toggle navigation">
              ${icon("bars", "bars")}
            </button>
          </header>
          <main class="content">
            <nav class="tabs">
              <span class="brand">Simulation Tools</span>
              ${TABS.map(
                (t, i) => html`<a
                  href="#"
                  class=${classMap({ current: i === this.tab })}
                  @click=${(e: Event) => this.selectTab(e, i)}
                  >${t}</a
                >`,
              )}
            </nav>
            <div class="columns">
              <form class="panel" @submit=${(e: Event) => e.preventDefault()}>
                <div class="upload">
                  <label class="label" for="dem">Upload DEM for Fire Spread Simulation</label>
                  <div class="file">
                    <button class="button browse" type="button" @click=${() => this.picker.click()}>
                      Browse...
                    </button>
                    <input class="name" id="dem" type="text" readonly value="DEM_.tif" />
                    <input class="picker" type="file" aria-label="DEM file" />
                  </div>
                  <div class="progress">Upload complete</div>
                </div>
                ${FIELDS.map(
                  (f) => html`<number-field .label=${f.label} .value=${f.value}></number-field>`,
                )}
                <div>
                  <button class="button" type="submit">Simulate</button>
                  <p class="status">DEM uploaded and slope calculated for Fire Spread Simulation.</p>
                </div>
              </form>
              <slope-map></slope-map>
            </div>
          </main>
        </div>
      </div>
    `;
  }
}
